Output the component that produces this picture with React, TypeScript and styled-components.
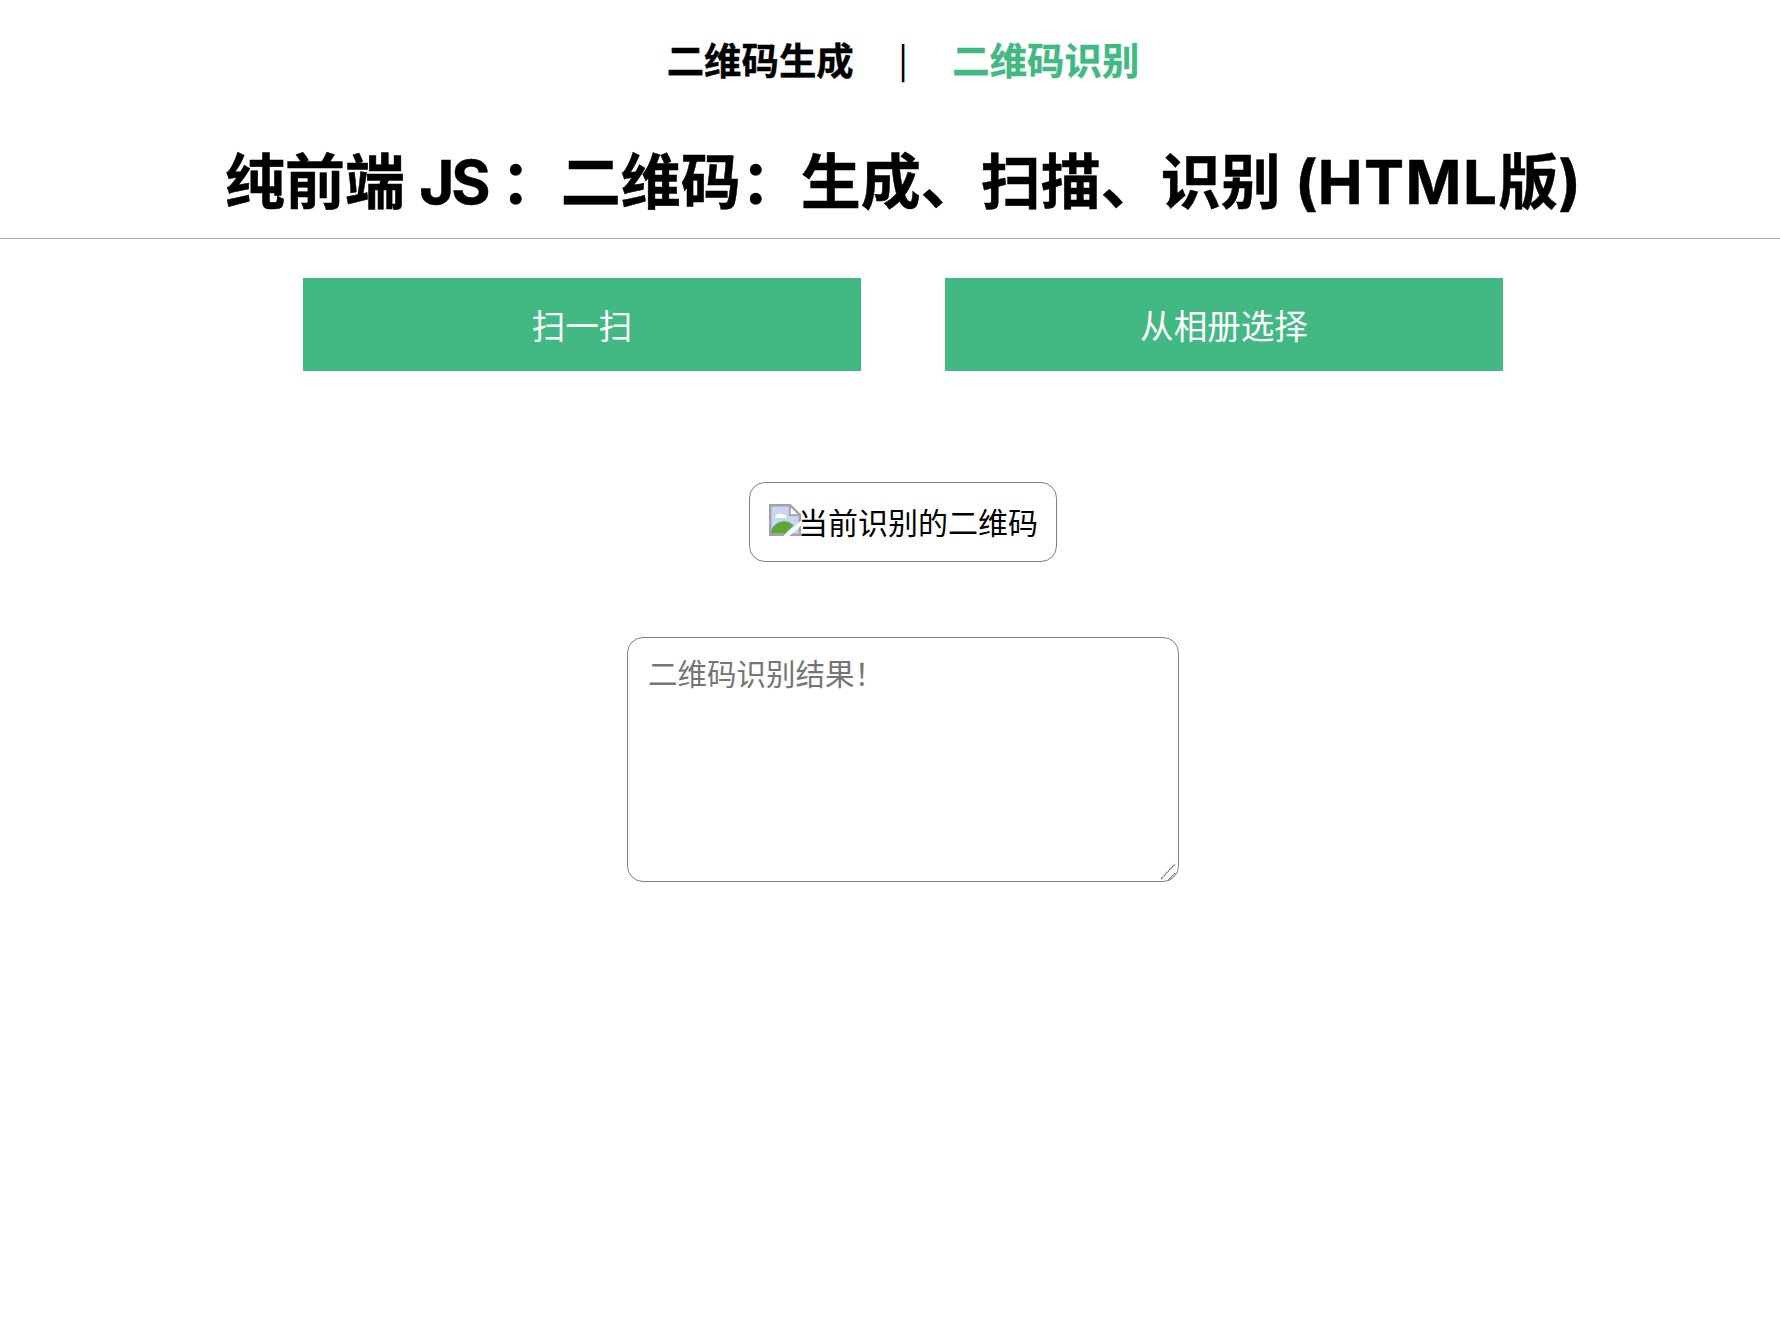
import { createGlobalStyle, styled } from 'styled-components';

const GlobalStyle = createGlobalStyle`
    html, body {
        margin: 0;
        padding: 0;
        background: #fff;
        overflow: hidden;
    }
    body {
        font-family: Inter, "Noto Sans CJK SC", sans-serif;
    }
`;

const BrokenImage = () => (
    <BrokenIcon width="32" height="32" viewBox="0 0 16 16">
        <path d="M0.6 0.6H10.6L15.4 5.4V15.4H0.6Z" fill="#c6d8f6" stroke="#a3a3a3" strokeWidth="1.2" />
        <path d="M10.4 0.6V5.6H15.4Z" fill="#fff" stroke="#a3a3a3" strokeWidth="0.9" />
        <path d="M3 6.8C3.4 5 5.2 4.2 6.4 5.1C8 4.9 9 6 8.6 7H3Z" fill="#fff" />
        <path d="M1.2 14.8V13C2.8 9.4 6.6 7.8 9.8 9L12.4 10.6L8 14.8Z" fill="#5ca63a" />
        <path d="M6.6 16.5L16.5 8V10.4L9.6 16.5Z" fill="#fff" />
    </BrokenIcon>
);

const ResizeGrip = () => (
    <GripIcon width="16" height="18" viewBox="0 0 16 18">
        <path d="M1 16L15 1M8.5 17L15 10" stroke="#4f4f4f" strokeWidth="1.1" strokeDasharray="1.4 0.6" fill="none" />
    </GripIcon>
);

export default function App() {
    return (
        <Page>
            <GlobalStyle />
            <Nav>
                <NavLink>二维码生成</NavLink>
                <NavDivider>|</NavDivider>
                <NavLink active>二维码识别</NavLink>
            </Nav>
            <Title>
                纯前端 <TightLatin>JS</TightLatin> ：二维码：生成、扫描、识别 (<WideLatin>HTML</WideLatin>版)
            </Title>
            <Rule />
            <Actions>
                <ActionButton>扫一扫</ActionButton>
                <ActionButton>从相册选择</ActionButton>
            </Actions>
            <ImageFrame>
                <BrokenImage />
                <AltText>当前识别的二维码</AltText>
            </ImageFrame>
            <ResultWrap>
                <ResultBox placeholder="二维码识别结果！" />
                <ResizeGrip />
            </ResultWrap>
        </Page>
    );
}

const Page = styled.div`
    width: 1806px;
    height: 1325px;
    display: flex;
    flex-direction: column;
    align-items: center;
    overflow: hidden;
`;

const Nav = styled.div`
    display: flex;
    align-items: center;
    gap: 44px;
    height: 50px;
    margin-top: 37px;
`;

const NavLink = styled.span<{ active?: boolean }>`
    font-size: 37.4px;
    font-weight: 700;
    line-height: 50px;
    color: ${(props) => (props.active ? '#42b983' : '#000')};
    -webkit-text-stroke: 0.4px ${(props) => (props.active ? '#42b983' : '#000')};
`;

const NavDivider = styled.span`
    font-size: 32px;
    line-height: 50px;
    color: #000;
    padding-top: 3px;
`;

const Title = styled.h1`
    margin: 50px 0 0;
    height: 90px;
    font-size: 60px;
    font-weight: 700;
    line-height: 90px;
    color: #000;
    white-space: nowrap;
    -webkit-text-stroke: 0.5px #000;
`;

const TightLatin = styled.span`
    letter-spacing: -3px;
    margin-right: -1px;
`;

const WideLatin = styled.span`
    letter-spacing: 1.5px;
`;

const Rule = styled.div`
    width: 100%;
    height: 1px;
    margin-top: 11px;
    background: #b4b4b4;
`;

const Actions = styled.div`
    display: flex;
    gap: 84px;
    margin-top: 39px;
`;

const ActionButton = styled.button`
    width: 558px;
    height: 93px;
    border: none;
    padding: 0;
    background: #42b983;
    color: #fff;
    font-family: inherit;
    font-size: 33.6px;
`;

const ImageFrame = styled.div`
    display: flex;
    align-items: center;
    box-sizing: border-box;
    width: 308px;
    height: 80px;
    margin-top: 111px;
    padding: 0 19px;
    border: 1px solid #808080;
    border-radius: 16px;
`;

const BrokenIcon = styled.svg`
    flex: none;
    margin-top: -5px;
`;

const AltText = styled.span`
    font-size: 30px;
    line-height: 40px;
    color: #000;
    white-space: nowrap;
    padding-top: 2px;
    margin-left: -3px;
`;

const ResultWrap = styled.div`
    position: relative;
    width: 552px;
    height: 245px;
    margin-top: 75px;
`;

const ResultBox = styled.textarea`
    box-sizing: border-box;
    display: block;
    width: 100%;
    height: 100%;
    padding: 14px 20px;
    border: 1px solid #808080;
    border-radius: 16px;
    outline: none;
    resize: none;
    font-family: "Noto Sans CJK SC", sans-serif;
    font-size: 29.5px;
    line-height: 40px;

    &::placeholder {
        color: #757575;
    }
`;

const GripIcon = styled.svg`
    position: absolute;
    right: 3px;
    bottom: 1px;
`;
